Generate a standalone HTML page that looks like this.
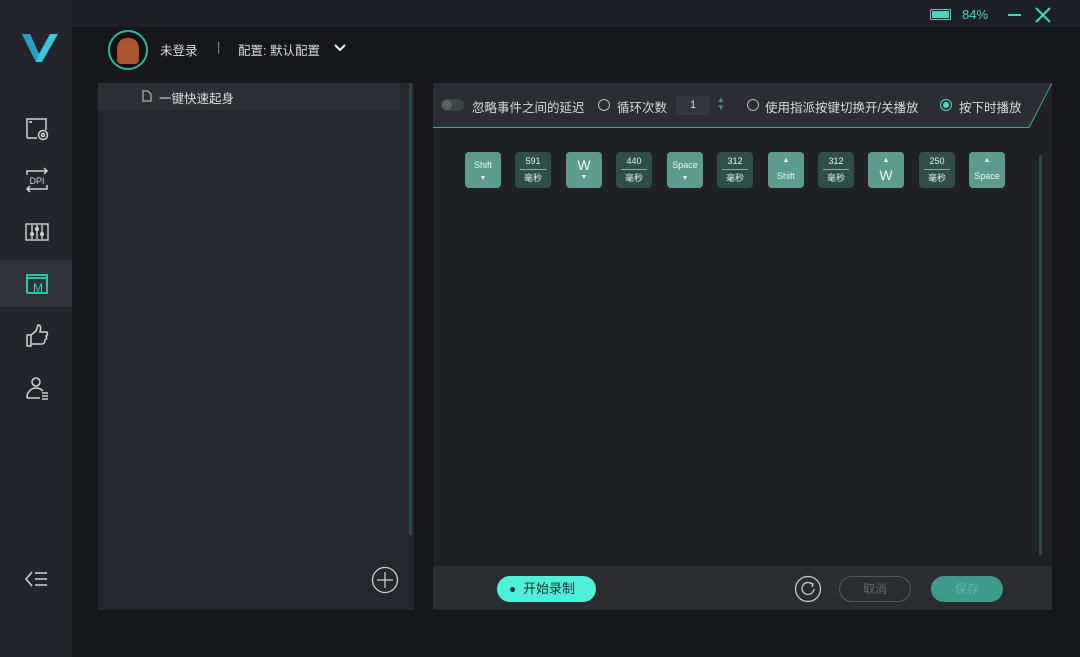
<!DOCTYPE html>
<html><head><meta charset="utf-8"><style>
*{margin:0;padding:0;box-sizing:border-box}
body{width:1080px;height:657px;background:#15171b;font-family:"Liberation Sans","Noto Sans CJK SC",sans-serif;color:#d8dadc;position:relative;overflow:hidden;font-size:12.5px}
.abs{position:absolute}
.side{left:0;top:0;width:72px;height:657px;background:#23252b}
.top{left:72px;top:0;width:1008px;height:27px;background:#1d2026}
.ico{left:22px;width:30px;height:30px}
.key{position:absolute;top:152px;width:36px;height:36px;border-radius:4px;background:#5d9c8d;color:#e8f4f0;text-align:center;font-size:9px;line-height:11px}
.del{background:#2e4e47}
.key .l{position:absolute;left:5px;right:5px;top:17px;border-top:1px solid #7fb3a5}
</style></head><body>
<div class="abs side"></div>
<div class="abs top"></div>
<svg class="abs" style="left:20px;top:30px" width="40" height="34" viewBox="0 0 40 34"><path d="M2 4 L10 4 L19 24 L30 4 L38 4 L22 32 L16 32 Z" fill="#3cc6de"/><path d="M2 4 L10 4 L19 24 L16 32Z" fill="#2a9fc4"/></svg>
<svg class="abs ico" style="top:114px" viewBox="0 0 30 30" fill="none" stroke="#d0d2d4" stroke-width="1.5"><path d="M5 24V5h19v11M5 24h10"/><path d="M8 9V8h2"/><circle cx="21" cy="21" r="4.5"/><circle cx="21" cy="21" r="1.5"/></svg>
<svg class="abs ico" style="top:165px" viewBox="0 0 30 30" fill="none" stroke="#d0d2d4" stroke-width="1.5"><path d="M5 10V6h20M22 3l3 3-3 3M25 20v4H5M8 21l-3 3 3 3"/><text x="15" y="19" font-size="9" fill="#d0d2d4" stroke="none" text-anchor="middle" font-family="Liberation Sans">DPI</text></svg>
<svg class="abs ico" style="top:217px" viewBox="0 0 30 30" fill="none" stroke="#d0d2d4" stroke-width="1.4"><rect x="4" y="7" width="22" height="16"/><path d="M10 8v14M15 8v14M20 8v14"/><circle cx="10" cy="17" r="1.3"/><circle cx="15" cy="12" r="1.3"/><circle cx="20" cy="17" r="1.3"/></svg>
<div class="abs" style="left:0;top:260px;width:72px;height:47px;background:#30333a"></div>
<svg class="abs ico" style="top:269px" viewBox="0 0 30 30" fill="none" stroke="#2fd3b8" stroke-width="1.8"><path d="M5 24V6h20v18H5"/><path d="M5 9h20"/><text x="16" y="23" font-size="12" fill="#2fd3b8" stroke="none" text-anchor="middle" font-family="Liberation Sans">M</text></svg>
<svg class="abs ico" style="top:321px" viewBox="0 0 30 30" fill="none" stroke="#d0d2d4" stroke-width="1.5"><path d="M5 14h4v11H5zM9 14l5-4 2-6c3 0 3 3 2 7h6c2 0 2 3 0 4 1 1 1 3-1 4 0 2-1 4-3 4H9"/></svg>
<svg class="abs ico" style="top:373px" viewBox="0 0 30 30" fill="none" stroke="#d0d2d4" stroke-width="1.5"><circle cx="14" cy="9" r="4"/><path d="M5 25c0-6 4-10 9-10 3 0 5 1 7 3M5 25h13M20 20h6M20 23h6M20 26h6"/></svg>
<svg class="abs" style="left:24px;top:568px" width="26" height="22" viewBox="0 0 26 22" fill="none" stroke="#d0d2d4" stroke-width="1.5"><path d="M8 4l-6 7 6 7M11 5h12M11 11h12M11 17h12"/></svg>

<div class="abs" style="left:108px;top:30px;width:40px;height:40px;border-radius:50%;border:2px solid #2fb59f;background:#111"><div style="margin:6px auto 0;width:22px;height:26px;border-radius:10px 10px 4px 4px;background:#a9552f"></div></div>
<div class="abs" style="left:160px;top:40px">未登录</div>
<div class="abs" style="left:217px;top:40px;color:#888">|</div>
<div class="abs" style="left:238px;top:40px">配置: 默认配置</div>
<svg class="abs" style="left:333px;top:43px" width="14" height="10"><path d="M2 2l5 5 5-5" stroke="#eee" stroke-width="2" fill="none"/></svg>

<div class="abs" style="left:930px;top:9px;width:21px;height:11px;border:1.5px solid #3fd9c0;border-radius:1px;padding:1px"><div style="width:100%;height:100%;background:#3fd9c0"></div></div>
<div class="abs" style="left:962px;top:7px;color:#3fd9c0;font-size:13px">84%</div>
<div class="abs" style="left:1008px;top:14px;width:13px;height:2px;background:#3fd9c0"></div>
<svg class="abs" style="left:1035px;top:7px" width="16" height="16"><path d="M1 1l14 14M15 1L1 15" stroke="#3fd9c0" stroke-width="2"/></svg>

<div class="abs" style="left:98px;top:83px;width:316px;height:527px;background:#25272c"></div>
<div class="abs" style="left:98px;top:83px;width:302px;height:27px;background:#2d2f34"></div>
<svg class="abs" style="left:142px;top:90px" width="10" height="12" fill="none" stroke="#ccc"><path d="M1 1h5l3 3v7H1z"/></svg>
<div class="abs" style="left:159px;top:88px">一键快速起身</div>
<div class="abs" style="left:409px;top:83px;width:3px;height:452px;background:#2c4a45"></div>
<svg class="abs" style="left:371px;top:566px" width="28" height="28" fill="none" stroke="#ccc" stroke-width="1.3"><circle cx="14" cy="14" r="12.5"/><path d="M14 6v16M6 14h16"/></svg>

<div class="abs" style="left:433px;top:83px;width:619px;height:527px;background:#202125"></div>
<svg class="abs" style="left:433px;top:83px" width="619" height="45"><path d="M0 0H619L596 44H0Z" fill="#2b2d32"/><path d="M0 44.5H596L619 0" stroke="#3fa696" fill="none"/></svg>
<div class="abs" style="left:441px;top:99px;width:23px;height:12px;border-radius:6px;background:#3d4644"><div style="width:10px;height:10px;margin:1px;border-radius:50%;background:#5a6361"></div></div>
<div class="abs" style="left:472px;top:97px">忽略事件之间的延迟</div>
<div class="abs" style="left:598px;top:99px;width:12px;height:12px;border-radius:50%;border:1px solid #bbb"></div>
<div class="abs" style="left:617px;top:97px">循环次数</div>
<div class="abs" style="left:676px;top:96px;width:34px;height:19px;background:#34363b;text-align:center;font-size:11px;line-height:19px">1</div>
<div class="abs" style="left:717px;top:96px;font-size:8px;color:#5a8a80;line-height:8px">▲<br>▼</div>
<div class="abs" style="left:747px;top:99px;width:12px;height:12px;border-radius:50%;border:1px solid #bbb"></div>
<div class="abs" style="left:765px;top:97px">使用指派按键切换开/关播放</div>
<div class="abs" style="left:940px;top:99px;width:12px;height:12px;border-radius:50%;border:1px solid #4fd8c2"><div style="width:6px;height:6px;margin:2px;border-radius:50%;background:#4fd8c2"></div></div>
<div class="abs" style="left:959px;top:97px">按下时播放</div>

<div class="key" style="left:465px"><div style="margin-top:8px">Shift</div><div style="font-size:7px;margin-top:2px">▼</div></div>
<div class="key del" style="left:515px"><div style="margin-top:4px">591</div><div class="l"></div><div style="margin-top:6px">毫秒</div></div>
<div class="key" style="left:566px"><div style="font-size:14px;margin-top:6px;line-height:14px">W</div><div style="font-size:7px">▼</div></div>
<div class="key del" style="left:616px"><div style="margin-top:4px">440</div><div class="l"></div><div style="margin-top:6px">毫秒</div></div>
<div class="key" style="left:667px"><div style="margin-top:8px">Space</div><div style="font-size:7px;margin-top:2px">▼</div></div>
<div class="key del" style="left:717px"><div style="margin-top:4px">312</div><div class="l"></div><div style="margin-top:6px">毫秒</div></div>
<div class="key" style="left:768px"><div style="font-size:7px;margin-top:3px">▲</div><div style="margin-top:5px">Shift</div></div>
<div class="key del" style="left:818px"><div style="margin-top:4px">312</div><div class="l"></div><div style="margin-top:6px">毫秒</div></div>
<div class="key" style="left:868px"><div style="font-size:7px;margin-top:3px">▲</div><div style="font-size:14px;line-height:14px;margin-top:2px">W</div></div>
<div class="key del" style="left:919px"><div style="margin-top:4px">250</div><div class="l"></div><div style="margin-top:6px">毫秒</div></div>
<div class="key" style="left:969px"><div style="font-size:7px;margin-top:3px">▲</div><div style="margin-top:5px">Space</div></div>
<div class="abs" style="left:1039px;top:155px;width:3px;height:400px;background:#2c4a45"></div>

<div class="abs" style="left:433px;top:566px;width:619px;height:44px;background:#2a2c30"></div>
<div class="abs" style="left:497px;top:576px;width:99px;height:26px;border-radius:13px;background:#4ff0da;color:#15332f;font-size:13px;line-height:26px;padding-left:26px">开始录制</div>
<div class="abs" style="left:510px;top:587px;width:5px;height:5px;border-radius:50%;background:#15332f"></div>
<svg class="abs" style="left:794px;top:575px" width="28" height="28" fill="none" stroke="#ccc" stroke-width="1.3"><circle cx="14" cy="14" r="12.5"/><path d="M18 9a6 6 0 1 0 2 5"/><path d="M16 8l3 1-1 3"/></svg>
<div class="abs" style="left:839px;top:576px;width:72px;height:26px;border-radius:13px;border:1px solid #55585c;color:#666;text-align:center;line-height:24px;font-size:12px">取消</div>
<div class="abs" style="left:931px;top:576px;width:72px;height:26px;border-radius:13px;background:#3f9a8c;color:#5fb8a8;text-align:center;line-height:26px;font-size:12px">保存</div>
</body></html>
